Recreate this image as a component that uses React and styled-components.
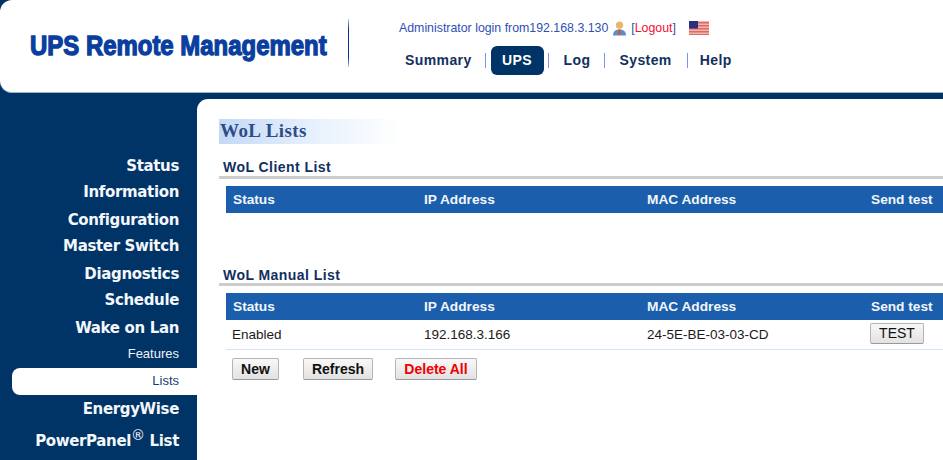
import React from 'react';
import styled, { createGlobalStyle } from 'styled-components';

const GlobalStyle = createGlobalStyle`
  html, body {
    margin: 0;
    padding: 0;
    background: #003366;
  }
  body {
    font-family: "Liberation Sans", Arial, sans-serif;
  }
`;

const Page = styled.div`
  width: 943px;
  height: 460px;
  overflow: hidden;
  background: #003366;
`;

const Header = styled.header`
  display: flex;
  height: 93px;
  background: #fff;
  border-radius: 12px 0 0 12px;
  border-bottom: 1px solid #9fb2c6;
  box-sizing: border-box;
`;

const Logo = styled.h1`
  margin: 0;
  width: 318px;
  padding: 29px 0 0 30px;
  box-sizing: content-box;
  font-family: "Liberation Sans", sans-serif;
  font-size: 28.5px;
  line-height: 32px;
  font-weight: 700;
  white-space: nowrap;
  color: #0a3fa0;
  -webkit-text-stroke: 1.4px #0a3fa0;
  & > span {
    display: inline-block;
    transform: scaleX(0.84);
    transform-origin: left center;
  }
`;

const Divider = styled.div`
  width: 1px;
  height: 48px;
  margin-top: 19px;
  background: linear-gradient(#b9c8ee, #0a2f9a 20%, #0a2f9a 80%, #b9c8ee);
`;

const HeaderRight = styled.div`
  display: flex;
  flex-direction: column;
  padding: 21px 0 0 50px;
`;

const LoginRow = styled.div`
  display: flex;
  align-items: center;
  height: 14px;
  font-size: 12.35px;
  color: #3050b4;
  white-space: nowrap;
`;

const LoginIcon = styled.svg`
  width: 15px;
  height: 15px;
  margin: 0 4px 0 4px;
`;

const Logout = styled.span`
  color: #3050b4;
  & > b {
    font-weight: 400;
    color: #f01030;
  }
`;

const Flag = styled.svg`
  width: 20px;
  height: 14px;
  margin-left: 13px;
`;

const Nav = styled.nav`
  display: flex;
  align-items: center;
  margin: 11px 0 0 6px;
`;

const NavItem = styled.a`
  font-size: 14px;
  font-weight: 700;
  line-height: 29px;
  letter-spacing: 0.4px;
  color: ${p => (p.$active ? '#fff' : '#12305e')};
  background: ${p => (p.$active ? '#003366' : 'transparent')};
  border-radius: 6px;
  padding: 0 ${p => (p.$active ? '11.500px' : '0')};
`;

const NavSep = styled.span`
  width: 1px;
  height: 15px;
  background: #7f92ee;
  margin: 0 ${p => p.$right}px 0 ${p => p.$left}px;
`;

const Body = styled.div`
  display: flex;
  height: 367px;
  padding-top: 6px;
`;

const Sidebar = styled.aside`
  width: 197px;
  flex: none;
  padding-top: 57px;
  box-sizing: border-box;
`;

const SideItem = styled.div`
  height: ${p => p.$h}px;
  margin-top: ${p => p.$top || 0}px;
  line-height: 20px;
  padding-right: 18px;
  text-align: right;
  font-family: "DejaVu Sans", sans-serif;
  font-size: 15px;
  font-weight: 700;
  color: #f4f7fb;
  white-space: nowrap;
  letter-spacing: -0.35px;
  & sup {
    font-size: 14px;
    line-height: 0;
    font-weight: 400;
  }
`;

const SideSub = styled.div`
  height: 27px;
  line-height: 26px;
  padding-right: 18px;
  text-align: right;
  font-size: 13px;
  color: ${p => (p.$active ? '#1c3d70' : '#eef2f8')};
  background: ${p => (p.$active ? '#fff' : 'transparent')};
  border-radius: 8px 0 0 8px;
  margin-left: ${p => (p.$active ? '12px' : '0')};
`;

const Main = styled.main`
  flex: 1;
  min-width: 0;
  background: #fff;
  border-radius: 11px 0 0 0;
  padding: 20px 0 0 22px;
  overflow: hidden;
`;

const PageTitle = styled.h2`
  margin: 0;
  width: 181px;
  height: 25px;
  padding-left: 1px;
  box-sizing: border-box;
  font-family: "Liberation Serif", serif;
  font-size: 19px;
  line-height: 24px;
  font-weight: 700;
  letter-spacing: 0.45px;
  color: #2f4d84;
  background: linear-gradient(90deg, #c2d9f7, #e6f0fd 50%, #fff);
`;

const Section = styled.section`
  margin-top: ${p => p.$top}px;
`;

const SectionTitle = styled.h3`
  margin: 0;
  padding-left: 4px;
  height: ${p => p.$h}px;
  font-size: 14px;
  line-height: 20px;
  font-weight: 700;
  letter-spacing: 0.45px;
  color: #12305e;
  border-bottom: 3px solid #cdcdcd;
  width: 900px;
`;

const Table = styled.div`
  margin: 7px 0 0 7px;
  width: 900px;
`;

const Row = styled.div`
  display: grid;
  grid-template-columns: 191px 223px 224px 1fr;
  align-items: center;
  height: ${p => (p.$head ? '27px' : '30px')};
  background: ${p => (p.$head ? '#1b5eab' : '#fff')};
  border-bottom: ${p => (p.$head ? 'none' : '1px solid #d3e2f7')};
  box-sizing: border-box;
`;

const HeadCell = styled.div`
  padding-left: 7px;
  font-size: 13.7px;
  font-weight: 700;
  color: #f2f6fb;
`;

const Cell = styled.div`
  padding-left: ${p => (p.$tight ? '6px' : '7px')};
  font-size: 13.5px;
  color: #1a1a1a;
`;

const Btn = styled.button`
  height: 22px;
  width: ${p => p.$w}px;
  margin-right: ${p => p.$gap || 0}px;
  padding: 0;
  font-family: "Liberation Sans", sans-serif;
  font-size: 14px;
  font-weight: 700;
  color: ${p => p.$color || '#111'};
  border: 1px solid #b4b4b4;
  border-bottom-color: #999;
  border-radius: 2px;
  background: linear-gradient(#f8f8f8, #e2e2e2);
`;

const TestBtn = styled(Btn)`
  display: block;
  height: 21px;
  margin-bottom: 3px;
  font-weight: 400;
`;

const Actions = styled.div`
  display: flex;
  margin: 8px 0 0 13px;
`;

const UserIcon = () => (
  <LoginIcon viewBox="0 0 15 15">
    <circle cx="7.5" cy="4.2" r="3.6" fill="#e9b766" />
    <path d="M1 14.5c0-4 2.5-6 6.5-6s6.5 2 6.5 6z" fill="#5f8cc4" />
    <path d="M6.5 8.5h2l.5 4-1.500 1.500-1.500-1.500z" fill="#d8573a" />
  </LoginIcon>
);

const UsFlag = () => (
  <Flag viewBox="0 0 20 14">
    <rect width="20" height="14" fill="#f3b6ae" />
    {[1, 4, 7, 10, 13].map(y => (
      <rect key={y} y={y} width="20" height="1.500" fill="#dc6a62" />
    ))}
    <rect width="9" height="7.500" fill="#2a2f80" />
  </Flag>
);

const columns = ['Status', 'IP Address', 'MAC Address', 'Send test'];

const HeadRow = () => (
  <Row $head>
    {columns.map(c => (
      <HeadCell key={c}>{c}</HeadCell>
    ))}
  </Row>
);

const App = () => {
  return (
    <Page>
      <GlobalStyle />
      <Header>
        <Logo>
          <span>UPS Remote Management</span>
        </Logo>
        <Divider />
        <HeaderRight>
          <LoginRow>
            Administrator login from192.168.3.130
            <UserIcon />
            <Logout>
              [<b>Logout</b>]
            </Logout>
            <UsFlag />
          </LoginRow>
          <Nav>
            <NavItem>Summary</NavItem>
            <NavSep $left={13} $right={5} />
            <NavItem $active>UPS</NavItem>
            <NavSep $left={4} $right={15} />
            <NavItem>Log</NavItem>
            <NavSep $left={14} $right={14} />
            <NavItem>System</NavItem>
            <NavSep $left={15} $right={12} />
            <NavItem>Help</NavItem>
          </Nav>
        </HeaderRight>
      </Header>
      <Body>
        <Sidebar>
          <SideItem $h={26}>Status</SideItem>
          <SideItem $h={28}>Information</SideItem>
          <SideItem $h={26}>Configuration</SideItem>
          <SideItem $h={28}>Master Switch</SideItem>
          <SideItem $h={26}>Diagnostics</SideItem>
          <SideItem $h={28}>Schedule</SideItem>
          <SideItem $h={23}>Wake on Lan</SideItem>
          <SideSub>Features</SideSub>
          <SideSub $active>Lists</SideSub>
          <SideItem $h={32} $top={4}>EnergyWise</SideItem>
          <SideItem $h={30}>
            PowerPanel<sup>®</sup> List
          </SideItem>
        </Sidebar>
        <Main>
          <PageTitle>WoL Lists</PageTitle>
          <Section $top={13}>
            <SectionTitle $h={19}>WoL Client List</SectionTitle>
            <Table>
              <HeadRow />
            </Table>
          </Section>
          <Section $top={52}>
            <SectionTitle $h={18}>WoL Manual List</SectionTitle>
            <Table>
              <HeadRow />
              <Row>
                <Cell $tight>Enabled</Cell>
                <Cell>192.168.3.166</Cell>
                <Cell>24-5E-BE-03-03-CD</Cell>
                <Cell $tight>
                  <TestBtn $w={54}>TEST</TestBtn>
                </Cell>
              </Row>
            </Table>
            <Actions>
              <Btn $w={47} $gap={24}>New</Btn>
              <Btn $w={70} $gap={22}>Refresh</Btn>
              <Btn $w={82} $color="#f00000">Delete All</Btn>
            </Actions>
          </Section>
        </Main>
      </Body>
    </Page>
  );
};

export default App;
